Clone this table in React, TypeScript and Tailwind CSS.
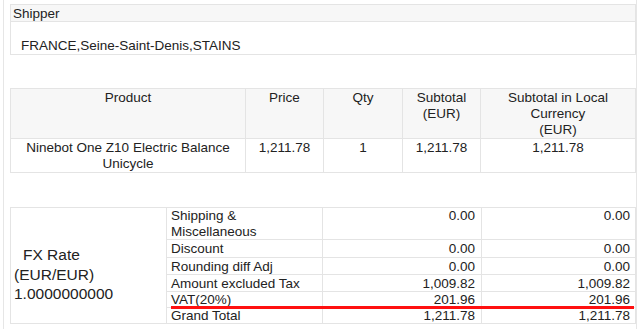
import React from "react";

const B = "border border-[#e4e4e4]";

export default function App() {
  return (
    <div className="w-[640px] h-[329px] overflow-hidden bg-white font-['Liberation_Sans',Arial,sans-serif] text-[#222] text-[13.5px]">
      <div className="ml-[3px] w-[634px] h-[329px] border-x border-[#e6e6e6] pl-[6px] pt-[4px]">
        {/* Shipper */}
        <div className="w-[626px] border border-[#e4e4e4]">
          <div className="h-[17px] bg-[#f7f7f7] border-b border-[#e4e4e4] pl-[2px] leading-[17px]">Shipper</div>
          <div className="h-[32px] pl-[10px] pt-[16px] leading-[16px]">FRANCE,Seine-Saint-Denis,STAINS</div>
        </div>

        {/* Products */}
        <table className="mt-[33px] w-[626px] table-fixed border-collapse leading-[16px]">
          <colgroup>
            <col className="w-[235px]" />
            <col className="w-[78px]" />
            <col className="w-[79px]" />
            <col className="w-[78px]" />
            <col />
          </colgroup>
          <thead>
            <tr className="h-[50px] bg-[#f7f7f7]">
              <th className={`${B} font-normal align-top pt-[1px] p-0 text-center`}>Product</th>
              <th className={`${B} font-normal align-top pt-[1px] p-0 text-center`}>Price</th>
              <th className={`${B} font-normal align-top pt-[1px] p-0 text-center`}>Qty</th>
              <th className={`${B} font-normal align-top pt-[1px] p-0 text-center`}>Subtotal<br />(EUR)</th>
              <th className={`${B} font-normal align-top pt-[1px] p-0 text-center`}>Subtotal in Local<br />Currency<br />(EUR)</th>
            </tr>
          </thead>
          <tbody>
            <tr className="h-[34px]">
              <td className={`${B} align-top pt-[1px] px-[14px] text-center`}>Ninebot One Z10 Electric Balance Unicycle</td>
              <td className={`${B} align-top pt-[1px] text-center`}>1,211.78</td>
              <td className={`${B} align-top pt-[1px] text-center`}>1</td>
              <td className={`${B} align-top pt-[1px] text-center`}>1,211.78</td>
              <td className={`${B} align-top pt-[1px] text-center`}>1,211.78</td>
            </tr>
          </tbody>
        </table>

        {/* Totals */}
        <div className="relative mt-[34px] w-[626px]">
          <table className="w-[626px] table-fixed border-collapse leading-[15px]">
            <colgroup>
              <col className="w-[156px]" />
              <col className="w-[156px]" />
              <col className="w-[159px]" />
              <col />
            </colgroup>
            <tbody>
              <tr className="h-[32px]">
                <td rowSpan={6} className={`${B} align-top pt-[37px] pl-[3px] text-[15.5px] leading-[19.5px]`}>
                  <div className="pl-[9px]">FX Rate</div>
                  <div>(EUR/EUR)</div>
                  <div>1.0000000000</div>
                </td>
                <td className={`${B} align-top pl-[4px] leading-[15.5px]`}>Shipping &amp;<br />Miscellaneous</td>
                <td className={`${B} align-top text-right pr-[6px] leading-[15.5px]`}>0.00</td>
                <td className={`${B} align-top text-right pr-[5px] leading-[15.5px]`}>0.00</td>
              </tr>
              <tr className="h-[18px]">
                <td className={`${B} pl-[4px]`}>Discount</td>
                <td className={`${B} text-right pr-[6px]`}>0.00</td>
                <td className={`${B} text-right pr-[5px]`}>0.00</td>
              </tr>
              <tr className="h-[17px]">
                <td className={`${B} pl-[4px]`}>Rounding diff Adj</td>
                <td className={`${B} text-right pr-[6px]`}>0.00</td>
                <td className={`${B} text-right pr-[5px]`}>0.00</td>
              </tr>
              <tr className="h-[17px]">
                <td className={`${B} pl-[4px]`}>Amount excluded Tax</td>
                <td className={`${B} text-right pr-[6px]`}>1,009.82</td>
                <td className={`${B} text-right pr-[5px]`}>1,009.82</td>
              </tr>
              <tr className="h-[16px]">
                <td className={`${B} pl-[4px]`}>VAT(20%)</td>
                <td className={`${B} text-right pr-[6px]`}>201.96</td>
                <td className={`${B} text-right pr-[5px]`}>201.96</td>
              </tr>
              <tr className="h-[16px]">
                <td className={`${B} pl-[4px]`}>Grand Total</td>
                <td className={`${B} text-right pr-[6px]`}>1,211.78</td>
                <td className={`${B} text-right pr-[5px]`}>1,211.78</td>
              </tr>
            </tbody>
          </table>
          <div className="absolute left-[161px] top-[99px] w-[463px] h-[3px] bg-[#ff1010]" />
        </div>
      </div>
    </div>
  );
}
